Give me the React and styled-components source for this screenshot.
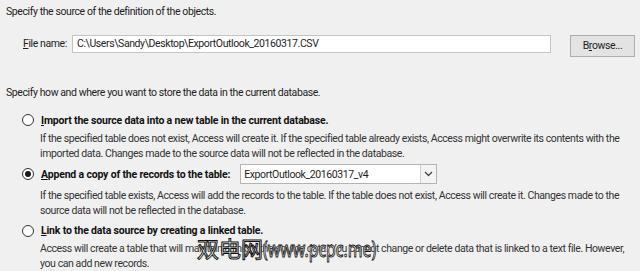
import React from 'react';
import styled, { createGlobalStyle } from 'styled-components';

const GlobalStyle = createGlobalStyle`
  html, body {
    margin: 0;
    padding: 0;
    background: #f0f0f0;
  }
`;

const options = [
  {
    key: 'import',
    mnemonic: 'I',
    label: 'mport the source data into a new table in the current database.',
    lines: [
      'If the specified table does not exist, Access will create it. If the specified table already exists, Access might overwrite its contents with the',
      'imported data. Changes made to the source data will not be reflected in the database.',
    ],
  },
  {
    key: 'append',
    mnemonic: 'A',
    label: 'ppend a copy of the records to the table:',
    checked: true,
    select: 'ExportOutlook_20160317_v4',
    lines: [
      'If the specified table exists, Access will add the records to the table. If the table does not exist, Access will create it. Changes made to the',
      'source data will not be reflected in the database.',
    ],
  },
  {
    key: 'link',
    mnemonic: 'L',
    label: 'ink to the data source by creating a linked table.',
    lines: [
      'Access will create a table that will maintain a link to the source data. You cannot change or delete data that is linked to a text file. However,',
      'you can add new records.',
    ],
  },
];

function App() {
  return (
    <Page>
      <GlobalStyle />
      <Heading>Specify the source of the definition of the objects.</Heading>
      <FileRow>
        <FieldLabel>
          <u>F</u>ile name:
        </FieldLabel>
        <TextBox>C:\Users\Sandy\Desktop\ExportOutlook_20160317.CSV</TextBox>
        <Button>
          B<u>r</u>owse...
        </Button>
      </FileRow>
      <Heading $top={28}>
        Specify how and where you want to store the data in the current database.
      </Heading>
      <Options>
        {options.map((opt) => (
          <Option key={opt.key} $select={!!opt.select}>
            <OptionRow $select={!!opt.select}>
              <Radio $checked={opt.checked} />
              <OptionLabel>
                <u>{opt.mnemonic}</u>
                {opt.label}
              </OptionLabel>
              {opt.select && (
                <Select>
                  <span>{opt.select}</span>
                  <SelectArrow>
                    <svg width='9' height='6' viewBox='0 0 9 6'>
                      <path
                        d='M1 1 L4.5 4.5 L8 1'
                        fill='none'
                        stroke='#444'
                        strokeWidth='1.3'
                      />
                    </svg>
                  </SelectArrow>
                </Select>
              )}
            </OptionRow>
            <Description>
              {opt.lines.map((line, i) => (
                <div key={i}>{line}</div>
              ))}
            </Description>
          </Option>
        ))}
      </Options>
      <Watermark>
        双电网<Latin>(www.pcpc.me)</Latin>
      </Watermark>
    </Page>
  );
}

export default App;

const Page = styled.div`
  position: relative;
  width: 640px;
  height: 271px;
  overflow: hidden;
  box-sizing: border-box;
  padding: 4px 0 0 6px;
  background: #f0f0f0;
  color: #1e1e1e;
  font-family: Roboto, 'Noto Sans', sans-serif;
  font-size: 10.5px;
  letter-spacing: -0.41px;

  u {
    text-decoration: underline;
    text-underline-offset: 1px;
  }
`;

const Heading = styled.div`
  line-height: 15px;
  margin-top: ${({ $top }) => ($top ? `${$top}px` : '0')};
  white-space: nowrap;
`;

const FileRow = styled.div`
  display: flex;
  align-items: flex-start;
  margin-top: 16px;
  padding-left: 17px;
  height: 22px;
`;

const FieldLabel = styled.div`
  width: 49px;
  flex-shrink: 0;
  line-height: 18px;
  white-space: nowrap;
`;

const TextBox = styled.div`
  box-sizing: border-box;
  width: 479px;
  height: 18px;
  background: #fff;
  border: 1px solid #c4c4c4;
  padding-left: 4px;
  line-height: 16px;
  white-space: nowrap;
  overflow: hidden;
`;

const Button = styled.div`
  box-sizing: border-box;
  width: 65px;
  height: 22px;
  margin-left: 19px;
  background: #e3e3e3;
  border: 1px solid #adadad;
  display: flex;
  align-items: center;
  justify-content: center;
  line-height: 20px;
`;

const Options = styled.div`
  display: flex;
  flex-direction: column;
  margin-top: 11px;
  padding-left: 16px;
`;

const Option = styled.div`
  margin-bottom: ${({ $select }) => ($select ? '3.5px' : '3.5px')};
`;

const OptionRow = styled.div`
  display: flex;
  align-items: center;
  height: ${({ $select }) => ($select ? '20px' : '18px')};
  margin-bottom: ${({ $select }) => ($select ? '4px' : '1.5px')};
`;

const Radio = styled.span`
  box-sizing: border-box;
  width: 12px;
  height: 12px;
  border-radius: 50%;
  border: 1px solid #333;
  background: #fff;
  margin-right: 7px;
  flex-shrink: 0;
  display: flex;
  align-items: center;
  justify-content: center;

  &::after {
    content: '';
    width: 6px;
    height: 6px;
    border-radius: 50%;
    background: #1a1a1a;
    display: ${({ $checked }) => ($checked ? 'block' : 'none')};
  }
`;

const OptionLabel = styled.div`
  font-weight: bold;
  color: #111;
  letter-spacing: -0.18px;
  white-space: nowrap;
`;

const Select = styled.div`
  box-sizing: border-box;
  display: flex;
  align-items: center;
  width: 197px;
  height: 20px;
  margin-left: 10px;
  background: #fff;
  border: 1px solid #b4b4b4;

  span {
    flex: 1;
    padding-left: 3px;
    white-space: nowrap;
  }
`;

const SelectArrow = styled.div`
  width: 15px;
  height: 18px;
  border-left: 1px solid #d0d0d0;
  background: #f4f4f4;
  display: flex;
  align-items: center;
  justify-content: center;
`;

const Description = styled.div`
  padding-left: 18px;
  line-height: 15px;
  color: #333;
  white-space: nowrap;
`;

const Watermark = styled.div`
  position: absolute;
  left: 197px;
  top: 233px;
  font-family: 'Noto Sans CJK SC', 'Noto Sans', sans-serif;
  font-size: 22px;
  line-height: 28px;
  color: #fff;
  -webkit-text-stroke: 1px #111;
  letter-spacing: 0;
  white-space: nowrap;
`;

const Latin = styled.span`
  display: inline-block;
  transform: scaleX(0.72);
  transform-origin: left center;
  font-family: 'Noto Sans', sans-serif;
`;
